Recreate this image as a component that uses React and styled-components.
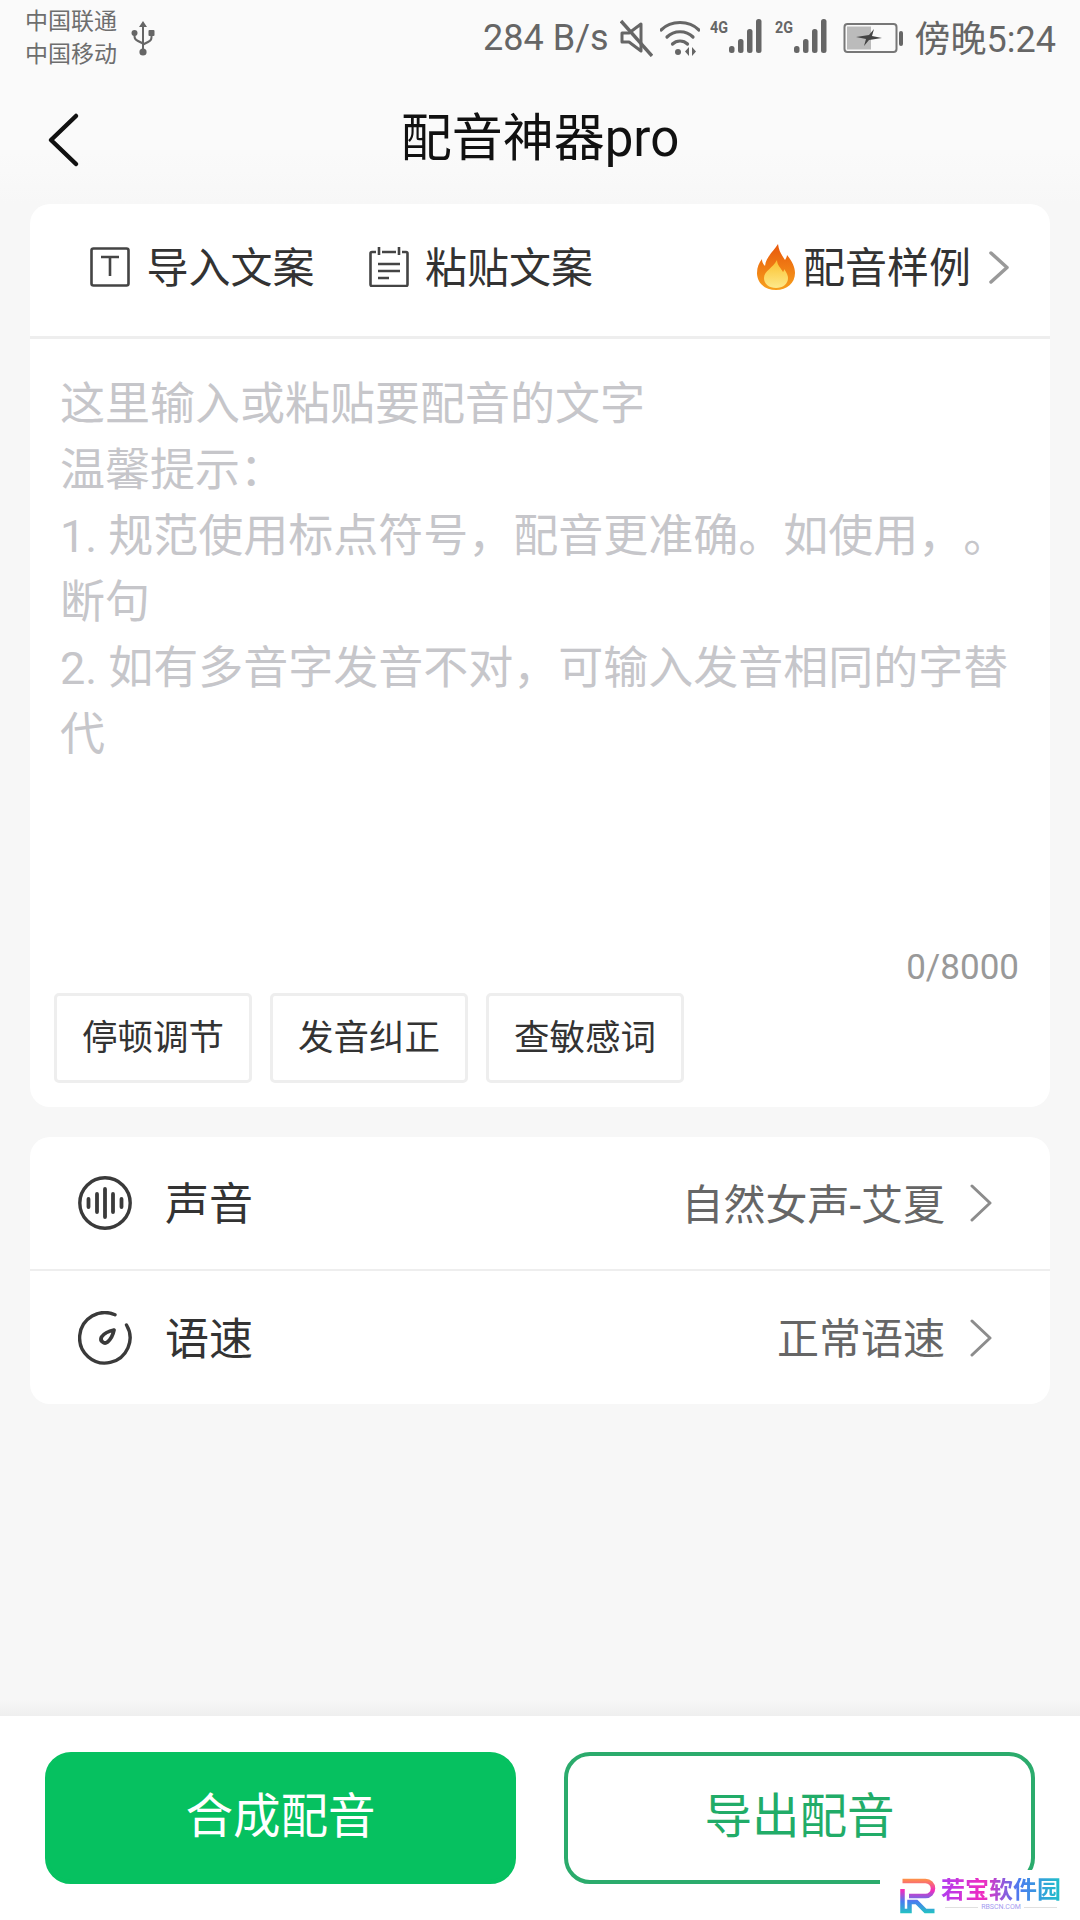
import React from 'react';
import styled, { createGlobalStyle } from 'styled-components';

const Global = createGlobalStyle`
  html, body { margin: 0; padding: 0; background: #f7f7f7; }
  * { box-sizing: border-box; }
  body { font-family: Roboto, "Noto Sans CJK SC", sans-serif; text-spacing-trim: space-all; }
`;

const Page = styled.div`
  position: relative;
  width: 1080px;
  height: 1920px;
  display: flex;
  flex-direction: column;
  background: #f7f7f7;
  overflow: hidden;
`;

const StatusBar = styled.div`
  height: 75px;
  background: #fafafa;
  display: flex;
  align-items: center;
  padding: 0 24px 0 25px;
  color: #666;
`;
const Carriers = styled.div`
  font-size: 23px;
  line-height: 33px;
  width: 106px;
  color: #6e6e6e;
`;
const StatusRight = styled.div`
  margin-left: auto;
  display: flex;
  align-items: center;
  height: 75px;
`;
const Speed = styled.span`
  font-size: 36px;
  color: #666;
  margin-right: 11px;
`;
const Clock = styled.span`
  font-size: 36px;
  color: #666;
  margin-left: 10px;
  padding-bottom: 3px;
`;
const StatusIcon = styled.svg`
  display: block;
  flex: none;
  margin-right: ${p => p.$mr || 0}px;
`;

const Header = styled.header`
  height: 129px;
  background: linear-gradient(#fafafa 60%, #f7f7f7);
  display: flex;
  align-items: center;
  justify-content: center;
  position: relative;
  padding-bottom: 11px;
`;
const BackBtn = styled.svg`
  position: absolute;
  left: 46px;
  top: 37px;
`;
const Title = styled.h1`
  margin: 0;
  font-size: 51px;
  font-weight: 400;
  color: #111;
`;

const Main = styled.main`
  flex: 1;
  padding: 0 30px;
  display: flex;
  flex-direction: column;
  gap: 30px;
`;
const Card = styled.section`
  background: #fff;
  border-radius: 20px;
`;
const Toolbar = styled.div`
  height: 135px;
  border-bottom: 3px solid #eeeeee;
  display: flex;
  align-items: center;
  padding: 0 0 6px 60px;
  color: #333;
  font-size: 42px;
`;
const ToolItem = styled.div`
  display: flex;
  align-items: center;
  gap: 16.5px;
  margin-right: 54px;
`;
const ToolLabel = styled.span`
  padding-bottom: 6px;
`;
const SampleLink = styled.div`
  margin-left: auto;
  margin-right: 41px;
  display: flex;
  align-items: center;
`;
const SampleText = styled.span`
  margin: 0 18px 0 8px;
  padding-bottom: 6px;
`;
const EditorBody = styled.div`
  height: 654px;
  padding: 33px 31px 0 30px;
  display: flex;
  flex-direction: column;
`;
const Placeholder = styled.div`
  flex: 1;
  font-size: 45px;
  line-height: 66px;
  color: #c6c6ca;
`;
const Counter = styled.div`
  font-size: 35px;
  line-height: 44px;
  color: #999;
  text-align: right;
  margin-bottom: 3px;
`;
const Chips = styled.div`
  display: flex;
  gap: 18px;
  padding: 0 24px 24px;
`;
const Chip = styled.div`
  width: 198px;
  height: 90px;
  border: 3px solid #eeeeee;
  border-radius: 5px;
  background: #fff;
  display: flex;
  align-items: center;
  justify-content: center;
  font-size: 35.5px;
  color: #333;
  padding-bottom: 7px;
`;

const Row = styled.div`
  height: ${p => p.$h}px;
  display: flex;
  align-items: center;
  padding: 0 58px 0 48px;
  border-bottom: ${p => (p.$line ? '2px solid #eeeeee' : 'none')};
`;
const RowLabel = styled.span`
  font-size: 44px;
  color: #333;
  margin-left: 33px;
  padding-bottom: 4px;
`;
const RowValue = styled.span`
  margin-left: auto;
  font-size: 42px;
  color: #666;
  margin-right: 25px;
  padding-bottom: 4px;
`;

const BottomBar = styled.footer`
  position: relative;
  height: 204px;
  background: #fff;
  padding: 36px 45px 0;
  display: flex;
  justify-content: space-between;
  &::before {
    content: '';
    position: absolute;
    left: 0;
    right: 0;
    top: -16px;
    height: 16px;
    background: linear-gradient(#f7f7f7, #efefef);
  }
`;
const ActionBtn = styled.button`
  width: 471px;
  height: 132px;
  border-radius: 26px;
  border: 4px solid ${p => (p.$primary ? '#06c160' : '#2bab6c')};
  background: ${p => (p.$primary ? '#06c160' : '#fff')};
  color: ${p => (p.$primary ? '#fff' : '#21ac68')};
  font-family: inherit;
  font-size: 47.5px;
  padding: 0 0 12px;
`;

const Watermark = styled.div`
  position: absolute;
  right: 0;
  bottom: 0;
  width: 200px;
  height: 50px;
  background: #fff;
  display: flex;
  gap: 3px;
  padding: 8px 0 0 20px;
`;
const MarkText = styled.div`
  display: flex;
  flex-direction: column;
  align-items: center;
  width: 120px;
`;
const MarkName = styled.div`
  font-size: 24px;
  line-height: 24px;
  font-weight: 700;
  white-space: nowrap;
  background: linear-gradient(90deg, #b03cf0, #f02cc0 35%, #4a7cf0 65%, #20c0c8);
  -webkit-background-clip: text;
  background-clip: text;
  color: transparent;
`;
const MarkSub = styled.div`
  width: 112px;
  display: flex;
  align-items: center;
  gap: 3px;
  font-size: 7px;
  line-height: 10px;
  color: #a59cf0;
  white-space: nowrap;
  &::before, &::after {
    content: '';
    flex: 1;
    height: 1px;
    background: #e0e0e0;
  }
`;

const UsbIcon = () => (
  <StatusIcon width="24" height="36" viewBox="0 0 24 36" fill="#666" style={{ marginTop: 2 }}>
    <path d="M12 0l4 6h-3v22h-2V6H8z" />
    <circle cx="12" cy="31" r="3.6" />
    <circle cx="3.5" cy="12" r="3" />
    <rect x="17.5" y="9" width="6" height="6" rx="1" />
    <path d="M2.5 12h2v3c0 2 1 3 3 4l4 2v2.5l-5-2.5c-3-1.500-4-3-4-6zM19.500 12h2v4c0 3-1 4.500-4 6l-5 2.500V22l4-2c2-1 3-2 3-4z" />
  </StatusIcon>
);

const MuteIcon = () => (
  <StatusIcon $mr={7} width="33" height="38" viewBox="0 0 33 38" fill="none" stroke="#666" strokeWidth="3">
    <path d="M2 14v9h7l12 9V5L9 14z" strokeLinejoin="round" />
    <path d="M1 2l31 35" strokeWidth="3.400" fill="none" />
  </StatusIcon>
);

const WifiIcon = () => (
  <StatusIcon $mr={10} width="40" height="40" viewBox="0 0 40 40" fill="none" stroke="#666" strokeWidth="3.200" strokeLinecap="round">
    <path d="M1 12C11 2 29 2 39 12" />
    <path d="M7 19c7-7 19-7 26 0" />
    <path d="M12.500 26c4-4 11-4 15 0" />
    <circle cx="18" cy="34" r="3" fill="#666" stroke="none" />
    <path d="M29 29v9l-4-4.500zM32 29v9l4-4.500z" fill="#666" stroke="none" />
  </StatusIcon>
);

const Signal = ({ label, mr }) => (
  <StatusIcon $mr={mr} width="56" height="40" viewBox="0 0 56 40">
    <text x="0" y="15" fontSize="17" fontWeight="700" fill="#666" fontFamily="Roboto, sans-serif" textLength="18" lengthAdjust="spacingAndGlyphs">{label}</text>
    <g fill="#666">
      <rect x="19" y="28" width="5.500" height="7" rx="2.500" />
      <rect x="28" y="21" width="5.500" height="14" rx="2.500" />
      <rect x="37" y="11" width="5.500" height="24" rx="2.500" />
      <rect x="46" y="1" width="5.500" height="34" rx="2.500" />
    </g>
  </StatusIcon>
);

const BatteryIcon = () => (
  <StatusIcon width="62" height="34" viewBox="0 0 62 34">
    <rect x="1.500" y="3" width="52" height="28" rx="3" fill="none" stroke="#777" strokeWidth="2" />
    <rect x="4" y="5.500" width="24" height="23" fill="#bbb" />
    <rect x="56" y="10" width="4" height="15" rx="2" fill="#666" />
    <path d="M13 16l13-2 5-6-2 7 10 2-13 2-5 6 2-7z" fill="#444" />
  </StatusIcon>
);

const TextIcon = () => (
  <svg width="40" height="40" viewBox="0 0 40 40" fill="none" stroke="#444" strokeWidth="2.600">
    <rect x="1.500" y="1.500" width="37" height="37" rx="2" />
    <path d="M11 10h18M20 10v19" />
  </svg>
);
const NoteIcon = () => (
  <svg width="40" height="40" viewBox="0 0 40 40" fill="none" stroke="#444" strokeWidth="2.600">
    <path d="M7 5H3a1.500 1.500 0 0 0-1.500 1.500v31A1.500 1.500 0 0 0 3 39h34a1.500 1.500 0 0 0 1.500-1.500v-31A1.500 1.500 0 0 0 37 5h-4M13 5h14" />
    <path d="M10 0v8M30 0v8M9 17h22M9 24h22M9 31h11" />
  </svg>
);
const Flame = () => (
  <svg width="38" height="46" viewBox="0 0 38 46">
    <defs>
      <linearGradient id="fl" x1="0" y1="0" x2="0" y2="1">
        <stop offset="0" stopColor="#e8570c" />
        <stop offset="1" stopColor="#f7a01c" />
      </linearGradient>
      <linearGradient id="fi" x1="0" y1="0" x2="0" y2="1">
        <stop offset="0" stopColor="#fbc02d" />
        <stop offset="1" stopColor="#fde98a" />
      </linearGradient>
    </defs>
    <path d="M21 0c1 8 4 11 7 16 1-2 2-3 2-5 5 6 8 12 8 18 0 10-8 17-19 17S0 39 0 29c0-6 2-10 5-14 0 3 1 5 3 7C9 13 16 8 21 0z" fill="url(#fl)" />
    <path d="M20 16c0 5 4 8 6 12 1-1 1-2 1-3 3 4 4 7 4 9 0 6-5 10-12 10S7 40 7 34c0-7 9-10 13-18z" fill="url(#fi)" />
  </svg>
);
const Chevron = ({ w = 20, h = 33, color = '#999', sw = 3.500 }) => (
  <svg width={w} height={h} viewBox={`0 0 ${w} ${h}`} fill="none" stroke={color} strokeWidth={sw} strokeLinecap="round" strokeLinejoin="round">
    <path d={`M2 2L${w - 2} ${h / 2}L2 ${h - 2}`} />
  </svg>
);
const VoiceIcon = () => (
  <svg width="54" height="54" viewBox="0 0 54 54" fill="none" stroke="#3a3a3a" strokeWidth="3.400" strokeLinecap="round">
    <circle cx="27" cy="27" r="25.200" />
    <path d="M10.500 23v8M19 18v18M27 13v28M35 18v18M43.500 23v8" strokeWidth="3.800" />
  </svg>
);
const SpeedIcon = () => (
  <svg width="54" height="54" viewBox="0 0 54 54" fill="none" stroke="#3a3a3a" strokeWidth="3.400" strokeLinecap="round">
    <path d="M37 3.800A25.200 25.200 0 1 0 48.500 14" />
    <path d="M36 19C31 20 26 22.500 23.500 26a4 4 0 0 0 6 5C32.500 28.500 35 24 36 19z" strokeLinejoin="round" strokeWidth="3.800" />
  </svg>
);
const RLogo = () => (
  <svg width="38" height="36" viewBox="0 0 38 36" fill="none" strokeWidth="4.500">
    <defs>
      <linearGradient id="rg" x1="0" y1="0" x2="0" y2="36" gradientUnits="userSpaceOnUse">
        <stop offset="0" stopColor="#ff9a3c" />
        <stop offset="0.35" stopColor="#f02cc0" />
        <stop offset="0.65" stopColor="#4a7cf0" />
        <stop offset="1" stopColor="#20c8c0" />
      </linearGradient>
    </defs>
    <path d="M2.500 3h23a7.500 7.500 0 0 1 0 15H9M2.500 11v22h7v-9h7l9 9h9" stroke="url(#rg)" />
  </svg>
);

const placeholderLines = [
  '这里输入或粘贴要配音的文字',
  '温馨提示：',
  '1. 规范使用标点符号，配音更准确。如使用，。',
  '断句',
  '2. 如有多音字发音不对，可输入发音相同的字替',
  '代',
];

export default function App() {
  return (
    <Page>
      <Global />
      <StatusBar>
        <Carriers>中国联通<br />中国移动</Carriers>
        <UsbIcon />
        <StatusRight>
          <Speed>284 B/s</Speed>
          <MuteIcon />
          <WifiIcon />
          <Signal label="4G" mr={9} />
          <Signal label="2G" mr={12} />
          <BatteryIcon />
          <Clock>傍晚5:24</Clock>
        </StatusRight>
      </StatusBar>
      <Header>
        <BackBtn width="34" height="56" viewBox="0 0 34 56" fill="none" stroke="#111" strokeWidth="4.500" strokeLinecap="round" strokeLinejoin="round">
          <path d="M30 4L5 28l25 24" />
        </BackBtn>
        <Title>配音神器pro</Title>
      </Header>
      <Main>
        <Card>
          <Toolbar>
            <ToolItem><TextIcon /><ToolLabel>导入文案</ToolLabel></ToolItem>
            <ToolItem><NoteIcon /><ToolLabel>粘贴文案</ToolLabel></ToolItem>
            <SampleLink>
              <Flame />
              <SampleText>配音样例</SampleText>
              <Chevron />
            </SampleLink>
          </Toolbar>
          <EditorBody>
            <Placeholder>
              {placeholderLines.map(l => <div key={l}>{l}</div>)}
            </Placeholder>
            <Counter>0/8000</Counter>
          </EditorBody>
          <Chips>
            <Chip>停顿调节</Chip>
            <Chip>发音纠正</Chip>
            <Chip>查敏感词</Chip>
          </Chips>
        </Card>
        <Card>
          <Row $h={134} $line>
            <VoiceIcon />
            <RowLabel>声音</RowLabel>
            <RowValue>自然女声-艾夏</RowValue>
            <Chevron w={22} h={38} color="#8c8c8c" sw={3} />
          </Row>
          <Row $h={133}>
            <SpeedIcon />
            <RowLabel>语速</RowLabel>
            <RowValue>正常语速</RowValue>
            <Chevron w={22} h={38} color="#8c8c8c" sw={3} />
          </Row>
        </Card>
      </Main>
      <BottomBar>
        <ActionBtn $primary>合成配音</ActionBtn>
        <ActionBtn>导出配音</ActionBtn>
      </BottomBar>
      <Watermark>
        <RLogo />
        <MarkText>
          <MarkName>若宝软件园</MarkName>
          <MarkSub>RBSCN.COM</MarkSub>
        </MarkText>
      </Watermark>
    </Page>
  );
}
